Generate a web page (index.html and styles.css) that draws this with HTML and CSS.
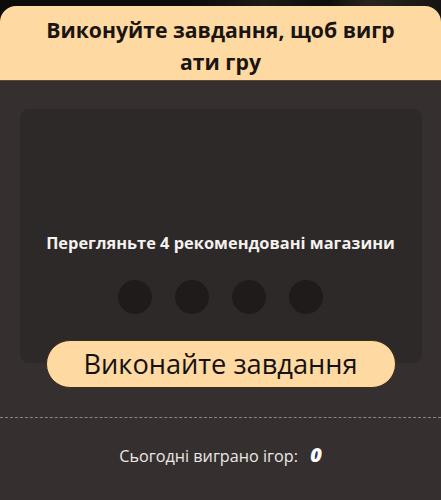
FILE: index.html
```html
<!DOCTYPE html>
<html lang="uk">
<head>
<meta charset="utf-8">
<link rel="stylesheet" href="styles.css">
</head>
<body>
<div class="screen">
  <div class="backdrop"></div>
  <header class="sheet-head">
    <h1 class="title">Виконуйте завдання, щоб вигр<br>ати гру</h1>
  </header>
  <main class="sheet-body">
    <section class="task-card">
      <p class="task-text">Перегляньте 4 рекомендовані магазини</p>
      <div class="dots">
        <span class="dot"></span>
        <span class="dot"></span>
        <span class="dot"></span>
        <span class="dot"></span>
      </div>
    </section>
    <button class="cta">Виконайте завдання</button>
    <hr class="divider">
    <p class="stats">Сьогодні виграно ігор: <b class="count">0</b></p>
  </main>
</div>
</body>
</html>
```
FILE: styles.css
```css
* { box-sizing: border-box; }
html, body {
  margin: 0;
  padding: 0;
  background: #0d0b0a;
  font-family: "Open Sans", "Liberation Sans", sans-serif;
}
.screen {
  width: 441px;
  height: 500px;
  overflow: hidden;
  display: flex;
  flex-direction: column;
  background: linear-gradient(100deg, #0c0b0a 0%, #0c0b0a 35%, #1d1a17 50%, #0f0d0c 62%, #2a2520 70%, #0c0b0a 90%);
}
.backdrop {
  height: 6px;
  flex: none;
}
.sheet-head {
  flex: none;
  background: #fed9a1;
  border-radius: 16px 16px 0 0;
  padding: 8px 12px 2px;
  border-bottom: 1px solid #5a4a36;
}
.title {
  margin: 0;
  text-align: center;
  font-size: 21.2px;
  font-weight: 700;
  line-height: 32px;
  color: #1a1511;
}
.sheet-body {
  flex: 1;
  background: #35302f;
  display: flex;
  flex-direction: column;
  align-items: center;
  padding-top: 28px;
}
.task-card {
  width: 402px;
  height: 254px;
  background: #2d2928;
  border-radius: 9px;
  display: flex;
  flex-direction: column;
  align-items: center;
  padding-top: 122px;
}
.task-text {
  margin: 0;
  color: #f4f1ee;
  font-size: 16.4px;
  font-weight: 700;
  line-height: 24px;
}
.dots {
  display: flex;
  gap: 23px;
  margin-top: 25px;
}
.dot {
  width: 34px;
  height: 34px;
  border-radius: 50%;
  background: #1e1b1a;
}
.cta {
  margin-top: -23px;
  width: 350px;
  height: 48px;
  border-radius: 24px;
  border: 1.5px solid #3b2c1c;
  background: #fed9a1;
  color: #141110;
  font-family: "Open Sans", "Liberation Sans", sans-serif;
  font-size: 27.2px;
  font-weight: 400;
  line-height: 44px;
  padding: 0;
}
.divider {
  align-self: stretch;
  margin: 29px 0 0;
  border: 0;
  border-top: 1.5px dashed #8a8584;
  height: 0;
}
.stats {
  margin: 26px 0 0;
  color: #ece8e5;
  font-size: 16.2px;
  line-height: 22px;
}
.count {
  font-size: 20px;
  font-weight: 800;
  font-style: italic;
  color: #ffffff;
  margin-left: 8px;
}
```
